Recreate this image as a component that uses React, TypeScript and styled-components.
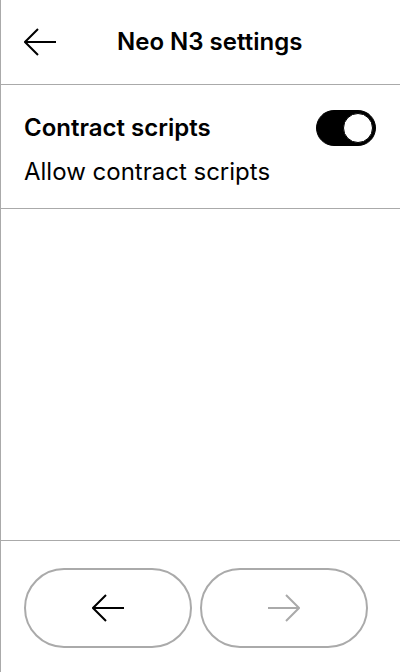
import React from "react";
import styled, { createGlobalStyle } from "styled-components";

const Global = createGlobalStyle`
  html, body { margin: 0; padding: 0; background: #fff; }
  body { font-family: Inter, "Noto Sans", sans-serif; color: #000; }
`;

const Screen = styled.div`
  width: 400px;
  height: 672px;
  box-sizing: border-box;
  border-left: 1px solid #aaa;
  display: flex;
  flex-direction: column;
  background: #fff;
`;

const Header = styled.header`
  height: 85px;
  box-sizing: border-box;
  border-bottom: 1px solid #aaa;
  display: flex;
  align-items: center;
  padding-left: 23px;
`;

const IconButton = styled.button`
  border: none;
  background: none;
  padding: 0;
  width: 32px;
  height: 28px;
  display: flex;
  align-items: center;
  justify-content: center;
  cursor: pointer;
`;

const Title = styled.h1`
  margin: 0 0 0 61px;
  font-size: 24px;
  font-weight: 600;
  line-height: 28px;
`;

const SettingRow = styled.section`
  height: 124px;
  box-sizing: border-box;
  border-bottom: 1px solid #aaa;
  padding: 25px 24px 0 23px;
  display: flex;
  flex-direction: column;
  gap: 12px;
`;

const RowTop = styled.div`
  display: flex;
  align-items: center;
  justify-content: space-between;
`;

const Label = styled.div`
  font-size: 24px;
  font-weight: 600;
  line-height: 28px;
`;

const Description = styled.div`
  font-size: 24px;
  font-weight: 400;
  line-height: 28px;
`;

const Toggle = styled.div<{ $on: boolean }>`
  width: 60px;
  height: 36px;
  border-radius: 18px;
  background: ${(p) => (p.$on ? "#000" : "#fff")};
  border: 1px solid #000;
  box-sizing: border-box;
  display: flex;
  align-items: center;
  justify-content: ${(p) => (p.$on ? "flex-end" : "flex-start")};
  padding: 0 2px;
`;

const Knob = styled.div`
  width: 30px;
  height: 30px;
  border-radius: 50%;
  background: #fff;
  border: 1px solid #000;
  box-sizing: border-box;
`;

const Spacer = styled.div`
  flex: 1;
`;

const Footer = styled.footer`
  height: 132px;
  box-sizing: border-box;
  border-top: 1px solid #aaa;
  padding: 27px 32px 0 23px;
  display: grid;
  grid-template-columns: 1fr 1fr;
  column-gap: 8px;
  align-content: start;
`;

const NavButton = styled.button`
  height: 80px;
  border: 2px solid #aaa;
  border-radius: 40px;
  background: #fff;
  display: flex;
  align-items: center;
  justify-content: center;
  padding: 0;
  cursor: pointer;
`;

const Arrow = ({ dir, color, w = 2 }: { dir: "left" | "right"; color: string; w?: number }) => (
  <svg width="32" height="28" viewBox="0 0 32 28" fill="none">
    <g transform={dir === "right" ? "translate(32 0) scale(-1 1)" : undefined}>
      <path d="M1 14 H32 M14 1 L1 14 L14 27" stroke={color} strokeWidth={w} />
    </g>
  </svg>
);

export default function App() {
  return (
    <>
      <Global />
      <Screen>
        <Header>
          <IconButton aria-label="Back">
            <Arrow dir="left" color="#000" />
          </IconButton>
          <Title>Neo N3 settings</Title>
        </Header>
        <SettingRow>
          <RowTop>
            <Label>Contract scripts</Label>
            <Toggle $on={true}>
              <Knob />
            </Toggle>
          </RowTop>
          <Description>Allow contract scripts</Description>
        </SettingRow>
        <Spacer />
        <Footer>
          <NavButton aria-label="Previous">
            <Arrow dir="left" color="#000" />
          </NavButton>
          <NavButton aria-label="Next">
            <Arrow dir="right" color="#aaa" />
          </NavButton>
        </Footer>
      </Screen>
    </>
  );
}
